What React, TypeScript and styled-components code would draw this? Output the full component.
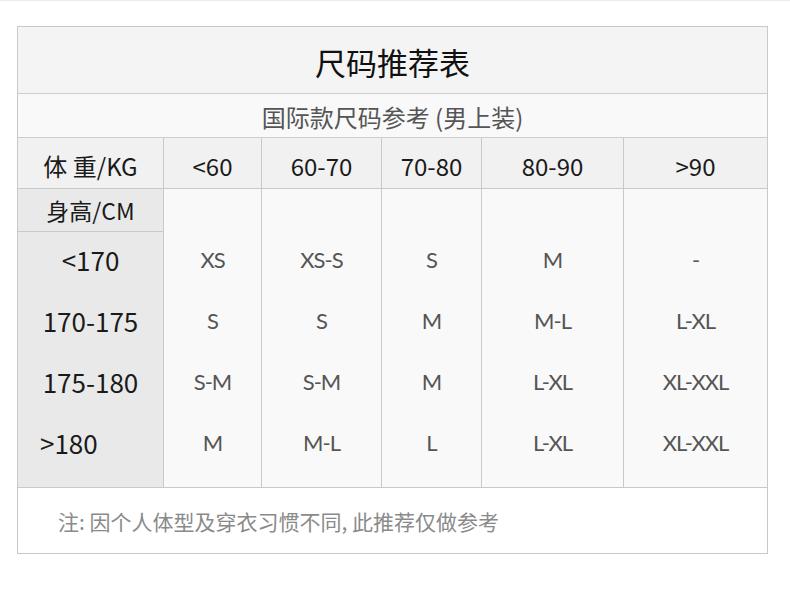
import styled, { createGlobalStyle } from "styled-components";

const heights = ["<170", "170-175", "175-180", ">180"];

const columns = [
	{ head: "<60", values: ["XS", "S", "S-M", "M"] },
	{ head: "60-70", values: ["XS-S", "S", "S-M", "M-L"] },
	{ head: "70-80", values: ["S", "M", "M", "L"] },
	{ head: "80-90", values: ["M", "M-L", "L-XL", "L-XL"] },
	{ head: ">90", values: ["-", "L-XL", "XL-XXL", "XL-XXL"] },
];

function App() {
	return (
		<Page>
			<GlobalStyle />
			<Card>
				<Title>尺码推荐表</Title>
				<Subtitle>国际款尺码参考 (男上装)</Subtitle>

				<Table>
					<Column $label>
						<HeadCell>体 重/KG</HeadCell>
						<LabelHead>身高/CM</LabelHead>
						{heights.map((h, i) => (
							<HeightCell key={h} $left={i === heights.length - 1}>
								{h}
							</HeightCell>
						))}
					</Column>

					{columns.map((col, i) => (
						<Column key={col.head} $last={i === columns.length - 1}>
							<HeadCell>{col.head}</HeadCell>
							<Spacer />
							{col.values.map((v, j) => (
								<ValueCell key={j}>{v}</ValueCell>
							))}
						</Column>
					))}
				</Table>

				<Note>注: 因个人体型及穿衣习惯不同, 此推荐仅做参考</Note>
			</Card>
		</Page>
	);
}

export default App;

const GlobalStyle = createGlobalStyle`
	body {
		margin: 0;
		background: #fff;
		font-family: "Noto Sans CJK SC", "Noto Sans", sans-serif;
	}
`;

const Page = styled("div")({
	borderTop: "1px solid #ebebeb",
	padding: "25px 0 43px 17px",
});

const Card = styled("div")({
	boxSizing: "border-box",
	width: "751px",
	border: "1px solid #c9c9c9",
	backgroundColor: "#fff",
});

const Title = styled("div")({
	height: "67px",
	paddingTop: "3px",
	boxSizing: "border-box",
	borderBottom: "1px solid #cdcdcd",
	backgroundColor: "#f4f4f4",
	display: "flex",
	alignItems: "center",
	justifyContent: "center",
	fontSize: "31px",
	color: "#111",
});

const Subtitle = styled("div")({
	height: "44px",
	paddingTop: "2px",
	boxSizing: "border-box",
	borderBottom: "1px solid #cdcdcd",
	backgroundColor: "#f9f9f9",
	display: "flex",
	alignItems: "center",
	justifyContent: "center",
	fontSize: "24px",
	color: "#555",
});

const Table = styled("div")({
	display: "grid",
	gridTemplateColumns: "146px 98px 120px 100px 142px 1fr",
	borderBottom: "1px solid #c9c9c9",
	backgroundColor: "#f9f9f9",
});

const Column = styled("div")<{ $label?: boolean; $last?: boolean }>((p) => ({
	display: "flex",
	flexDirection: "column",
	paddingBottom: "11px",
	borderRight: p.$last ? "none" : "1px solid #c9c9c9",
	backgroundColor: p.$label ? "#e9e9e9" : "#f9f9f9",
}));

const HeadCell = styled("div")({
	height: "51px",
	paddingTop: "4px",
	boxSizing: "border-box",
	borderBottom: "1px solid #c9c9c9",
	backgroundColor: "#f1f1f1",
	display: "flex",
	alignItems: "center",
	justifyContent: "center",
	fontSize: "24px",
	color: "#1a1a1a",
});

const LabelHead = styled("div")({
	height: "42px",
	borderBottom: "1px solid #c9c9c9",
	display: "flex",
	alignItems: "center",
	justifyContent: "center",
	fontSize: "23px",
	color: "#1a1a1a",
});

const Spacer = styled("div")({
	height: "43px",
});

const HeightCell = styled("div")<{ $left?: boolean }>((p) => ({
	height: "61px",
	boxSizing: "border-box",
	paddingBottom: "6px",
	display: "flex",
	alignItems: "center",
	justifyContent: p.$left ? "flex-start" : "center",
	paddingLeft: p.$left ? "22px" : "0",
	fontSize: "26px",
	color: "#1a1a1a",
}));

const ValueCell = styled("div")({
	height: "61px",
	boxSizing: "border-box",
	paddingBottom: "6px",
	display: "flex",
	alignItems: "center",
	justifyContent: "center",
	fontFamily: 'Lato, "Noto Sans", sans-serif',
	fontWeight: 400,
	fontSize: "22px",
	letterSpacing: "-1px",
	color: "#555",
});

const Note = styled("div")({
	height: "65px",
	paddingLeft: "40px",
	display: "flex",
	alignItems: "center",
	fontSize: "21px",
	color: "#8a8a8a",
});
